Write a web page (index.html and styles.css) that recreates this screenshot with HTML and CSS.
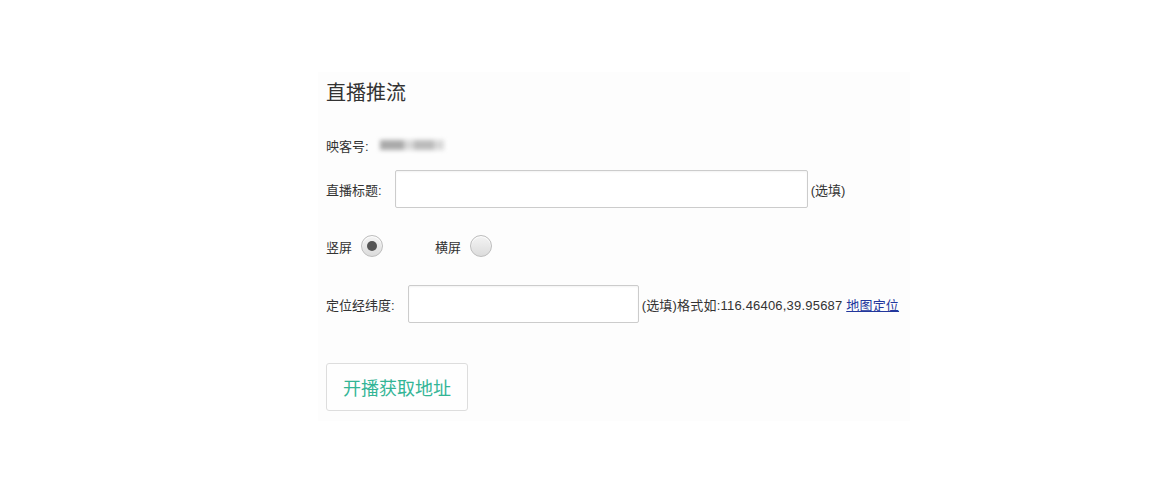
FILE: index.html
```html
<!DOCTYPE html>
<html lang="zh-CN">
<head>
    <meta charset="UTF-8">
    <title>直播推流</title>
    <link rel="stylesheet" href="styles.css">
</head>
<body>
    <div class="panel">
        <h1 class="title">直播推流</h1>

        <div class="row row-text">
            <span class="label">映客号:</span>
            <span class="blur-id">
                <span class="blob blob-dark"></span>
                <span class="blob blob-light"></span>
                <span class="blob blob-mid"></span>
                <span class="blob blob-light"></span>
            </span>
        </div>

        <div class="row row-input">
            <label class="label" for="title">直播标题:</label>
            <input class="field field-wide" type="text" id="title">
            <span class="hint">(选填)</span>
        </div>

        <div class="row row-text">
            <label class="radio-item">
                <span>竖屏</span>
                <input class="radio" type="radio" name="screen" checked>
            </label>
            <label class="radio-item">
                <span>横屏</span>
                <input class="radio" type="radio" name="screen">
            </label>
        </div>

        <div class="row row-input row-loc">
            <label class="label" for="loc">定位经纬度:</label>
            <input class="field field-short" type="text" id="loc">
            <span class="hint hint-loc">(选填)格式如:116.46406,39.95687 <a href="#">地图定位</a></span>
        </div>

        <button class="btn">开播获取地址</button>
    </div>
</body>
</html>
```

FILE: styles.css
```css
body {
    margin: 0;
    padding: 0;
    background: #fff;
    color: #333;
    font-family: "Liberation Sans", "Noto Sans CJK SC", sans-serif;
    font-size: 13px;
}

/* form panel */
.panel {
    width: 584px;
    margin: 72px 0 0 318px;
    padding: 7px 0 10px 8px;
    background: #fdfdfd;
}

.title {
    margin: 0;
    height: 28px;
    line-height: 28px;
    font-size: 20px;
    font-weight: normal;
    color: #333;
}

.row {
    display: flex;
    align-items: center;
}

.row-text {
    height: 24px;
    margin-top: 26px;
}

.row-input {
    height: 38px;
    margin-top: 13px;
}

.row-loc {
    margin-top: 27px;
}

.label {
    margin-right: 13px;
}

/* blurred account id */
.blur-id {
    display: flex;
    align-items: center;
    margin-left: -2px;
    filter: blur(2px);
}

.blob {
    display: block;
    height: 10px;
}

.blob-dark {
    width: 24px;
    background: #aaa;
}

.blob-light {
    width: 10px;
    background: #d8d8d8;
}

.blob-mid {
    width: 20px;
    background: #bbb;
}

.field {
    box-sizing: border-box;
    height: 38px;
    border: 1px solid #ccc;
    border-radius: 2px;
    background: #fff;
    box-shadow: inset 0 1px 2px rgba(0, 0, 0, 0.05);
    padding: 0 8px;
    font-size: 13px;
}

.field-wide {
    width: 413px;
}

.field-short {
    width: 231px;
}

.hint {
    margin-left: 3px;
}

.hint-loc {
    letter-spacing: 0.2px;
}

.hint a {
    color: #23379c;
}

/* radio buttons */
.radio-item {
    display: flex;
    align-items: center;
    margin-right: 52px;
}

.radio {
    appearance: none;
    -webkit-appearance: none;
    box-sizing: border-box;
    width: 22px;
    height: 22px;
    margin: 0 0 0 9px;
    border: 1px solid #bdbdbd;
    border-radius: 50%;
    background: linear-gradient(to bottom, #f4f4f4, #dcdcdc);
    box-shadow: inset 0 1px 1px #fff;
    position: relative;
}

.radio:checked::after {
    content: "";
    position: absolute;
    left: 5px;
    top: 5px;
    width: 10px;
    height: 10px;
    border-radius: 50%;
    background: #555;
}

.btn {
    display: block;
    margin-top: 40px;
    width: 142px;
    height: 48px;
    border: 1px solid #ddd;
    border-radius: 3px;
    background: #fefefe;
    color: #33b596;
    font-family: "Noto Sans CJK SC", sans-serif;
    font-size: 18px;
    cursor: pointer;
}
```
